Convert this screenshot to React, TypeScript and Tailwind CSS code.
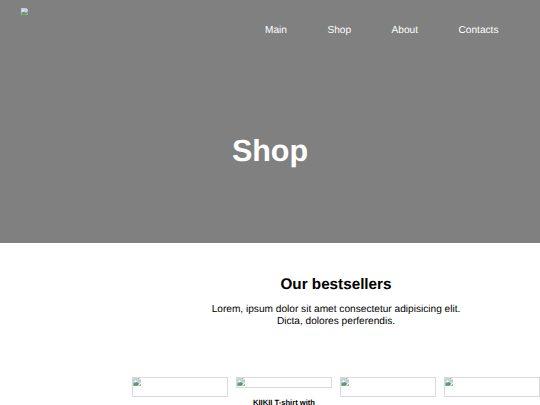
import React from 'react';

interface Product {
  id: number;
  title?: string;
}

const NAV_LINKS = ['Main', 'Shop', 'About', 'Contacts'];

const PRODUCTS: Product[] = [
  { id: 1 },
  { id: 2, title: 'KIIKII T-shirt with' },
  { id: 3 },
  { id: 4 },
];

// Thumbnail placeholder: torn page with a sky and a green hill
const ImageIcon: React.FC<{ className?: string }> = ({ className }) => (
  <svg viewBox="0 0 16 16" className={className}>
    <path d="M0 0h11l5 5v3l-4 3-3 5H0z" fill="#c6d3ea" stroke="#b4b8bd" strokeWidth="1" />
    <path d="M11 0v5h5z" fill="#ffffff" stroke="#a9adb3" strokeWidth="1" />
    <path d="M3 6.500c0-2 3-2 3.500-.5 2 0 2 2 .5 2H4c-1 0-1.500-.8-1-1.500z" fill="#ffffff" />
    <path d="M1 15.500V11l6-3 5 3-2.500 4.500z" fill="#5a9f58" />
    <path d="M11 16l5-5v5z" fill="#8fbb8e" />
  </svg>
);

const Header = () => (
  <header className="h-[243px] bg-[#808080] text-white">
    <div className="flex justify-between pl-[21px] pr-[41.500px]">
      <ImageIcon className="mt-[8px] h-[7px] w-[7px]" />
      <nav className="mt-[25px] flex gap-[40.500px] text-[10.150px] leading-[12px]">
        {NAV_LINKS.map(link => (
          <a key={link} href="#">{link}</a>
        ))}
      </nav>
    </div>
    <h1 className="mt-[97px] text-center text-[30.500px] font-bold leading-[34px]">Shop</h1>
  </header>
);

const ProductCard: React.FC<{ product: Product }> = ({ product }) => (
  <article className="w-[96px] shrink-0">
    <div className={`border border-[#d9d9d9] ${product.title ? 'h-[11px]' : 'h-[20px]'}`}>
      <ImageIcon className="h-[8px] w-[8px]" />
    </div>
    {product.title && (
      <h3 className="mt-[11px] text-center text-[7.600px] font-bold leading-[7px] whitespace-nowrap">
        {product.title}
      </h3>
    )}
  </article>
);

export default function App() {
  return (
    <div className="h-[405px] w-[540px] overflow-hidden bg-white font-['Liberation_Sans',Arial,sans-serif] text-black [text-rendering:geometricPrecision]">
      <Header />
      <main className="ml-[132px] w-[408px] pt-[33px]">
        <section className="text-center">
          <h2 className="text-[15.250px] font-bold leading-[18px]">Our bestsellers</h2>
          <p className="mx-auto mt-[10px] w-[256px] text-[10.150px] leading-[12px]">
            Lorem, ipsum dolor sit amet consectetur adipisicing elit. Dicta, dolores perferendis.
          </p>
        </section>
        <section className="mt-[49px] flex items-start gap-2">
          {PRODUCTS.map(product => (
            <ProductCard key={product.id} product={product} />
          ))}
        </section>
      </main>
    </div>
  );
}
